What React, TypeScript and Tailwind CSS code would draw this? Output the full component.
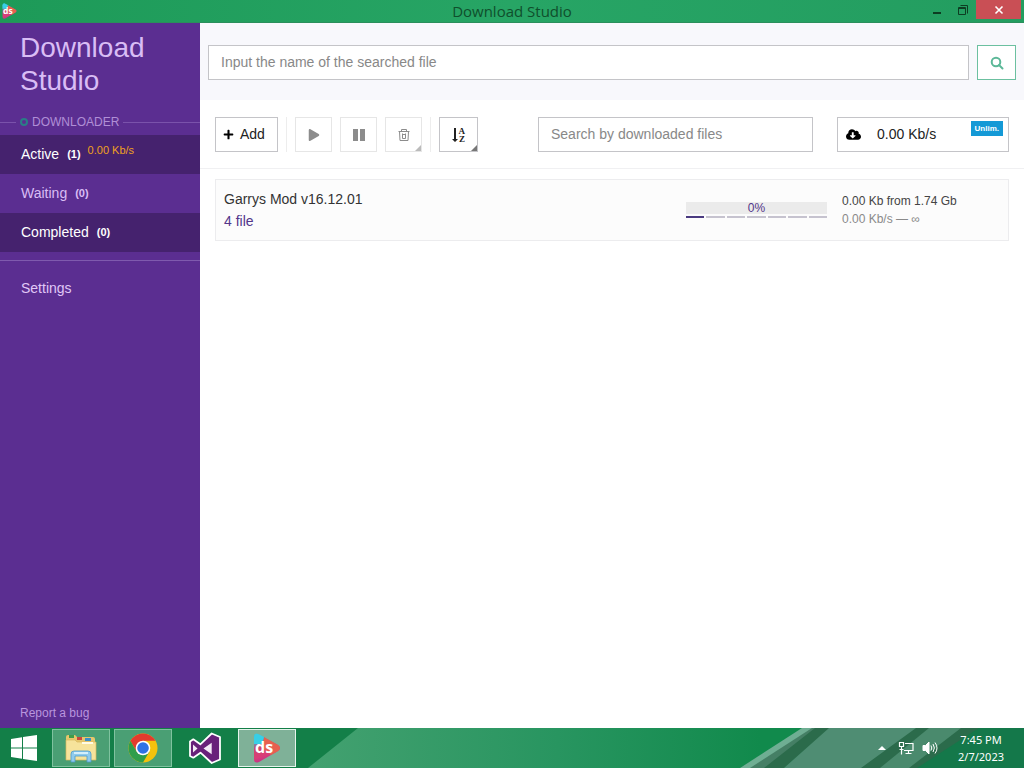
import { useState } from 'react'
import type { ReactNode } from 'react'
import { FaCloudDownloadAlt, FaPlay, FaPlus } from 'react-icons/fa'

const navItems = [
  { id: 'active', label: 'Active', count: 1, speed: '0.00 Kb/s', dark: true },
  { id: 'waiting', label: 'Waiting', count: 0, speed: '', dark: false },
  { id: 'completed', label: 'Completed', count: 0, speed: '', dark: true },
]

const SEGMENTS = 7

function DsLogo({ className, id }: { className: string; id: string }) {
  return (
    <svg viewBox="0 0 28 30" className={className} aria-hidden="true">
      <defs>
        <linearGradient id={id} x1="0" y1="0" x2="0.3" y2="1">
          <stop offset="0" stopColor="#35c4e8" />
          <stop offset="0.25" stopColor="#4f9fc4" />
          <stop offset="0.5" stopColor="#d0476c" />
          <stop offset="0.8" stopColor="#d93d78" />
          <stop offset="1" stopColor="#c0308c" />
        </linearGradient>
      </defs>
      <path d="M1 4Q1 0 5 1L25 12Q29 15 25 18L6 29Q1 31 1 26Z" fill={`url(#${id})`} />
      <path d="M11 4L25 12Q29 15 25 18L18 22L9 14Z" fill="#e8604f" />
      <path d="M1 4Q1 0 5 1L11 4L9 11H1Z" fill="#38cfe6" />
      <text x="2" y="20" fill="#fff" fontSize="16" fontWeight="700" fontFamily="Open Sans, sans-serif">
        ds
      </text>
    </svg>
  )
}

function TitleBar() {
  return (
    <header className="relative flex h-[23px] shrink-0 items-start justify-between border-b border-[#2b8f5c] bg-linear-to-r from-[#1d9a58] via-[#27a565] to-[#239d60]">
      <DsLogo id="ds-title" className="mt-[3px] ml-[2px] h-4 w-[15px]" />
      <h1 className="absolute inset-x-0 top-0 text-center font-['Open_Sans',sans-serif] text-[15px] leading-[23px] text-[#0f4f2c]">
        Download Studio
      </h1>
      <div className="relative flex items-start">
        <button aria-label="Minimize" className="flex h-[19px] w-[26px] items-center justify-center">
          <svg viewBox="0 0 10 10" className="h-[10px] w-[10px]">
            <rect x="1" y="7" width="8" height="2" fill="#0d3d22" />
          </svg>
        </button>
        <button aria-label="Restore" className="flex h-[19px] w-[26px] items-center justify-center">
          <svg viewBox="0 0 12 12" className="h-3 w-3" fill="none" stroke="#0d3d22">
            <path d="M1.500 3.500h7v7h-7zM1 4.500h8M3.500 1.500h7v8" />
          </svg>
        </button>
        <button aria-label="Close" className="mr-[3px] flex h-[19px] w-[45px] items-center justify-center bg-[#c94f55]">
          <svg viewBox="0 0 10 10" className="h-[10px] w-[10px]" stroke="#fff" strokeWidth="1.600">
            <path d="M1.500 1.500l7 7M8.500 1.500l-7 7" />
          </svg>
        </button>
      </div>
    </header>
  )
}

function Sidebar() {
  const [current, setCurrent] = useState('active')

  return (
    <aside className="flex w-[200px] shrink-0 flex-col bg-[#5b2e91] text-[#d9bdf5]">
      <h2 className="px-5 pt-2 text-[28px] leading-[33px]">Download Studio</h2>
      <div className="mt-[17px] flex h-4 items-center text-xs text-[#b08fd6]">
        <span className="h-px w-4 bg-[#7a52ab]" />
        <span className="mr-1 ml-1 h-2 w-2 rounded-full border-2 border-[#2a7d86]" />
        <span>DOWNLOADER</span>
        <span className="ml-1 h-px flex-1 bg-[#7a52ab]" />
      </div>
      <nav className="mt-[5px] border-b border-[#7f5aae] pb-2">
        {navItems.map((item) => (
          <a
            key={item.id}
            href={`#${item.id}`}
            aria-current={current === item.id ? 'page' : undefined}
            onClick={() => setCurrent(item.id)}
            className={
              item.dark
                ? 'flex h-[39px] items-center bg-[#45226e] pb-px pl-[21px] text-sm text-white'
                : 'flex h-[39px] items-center pb-px pl-[21px] text-sm text-[#d9bdf5]'
            }
          >
            <span>{item.label}</span>
            <span className="mt-[2px] ml-2 text-[11px] font-bold">({item.count})</span>
            {item.speed && <span className="mb-[6px] ml-[7px] text-[11px] text-[#f0a01e]">{item.speed}</span>}
          </a>
        ))}
      </nav>
      <a href="#settings" className="mt-[17px] pl-[21px] text-sm text-[#e0c8f7]">
        Settings
      </a>
      <a href="#report" className="mt-auto px-5 pb-[7px] text-xs text-[#b995de]">
        Report a bug
      </a>
    </aside>
  )
}

function ToolButton({ label, menu, dim, children }: { label: string; menu?: boolean; dim?: boolean; children: ReactNode }) {
  return (
    <button
      aria-label={label}
      className={
        dim
          ? 'relative flex h-[35px] w-[37px] items-center justify-center border border-[#e6e6e6] text-[#8c8c8c]'
          : 'relative flex h-[35px] w-[39px] items-center justify-center border border-[#c4c4c8] text-[#222]'
      }
    >
      {children}
      {menu && (
        <svg viewBox="0 0 6 6" className="absolute right-0 bottom-0 h-[6px] w-[6px]" fill={dim ? '#bbb' : '#777'}>
          <path d="M6 0v6H0z" />
        </svg>
      )}
    </button>
  )
}

function Toolbar() {
  return (
    <div className="flex items-center border-b border-[#f0f0f2] px-[15px] pt-[17px] pb-4">
      <button className="flex h-[35px] w-[63px] items-center border border-[#c4c4c8] pb-px pl-[7px] text-sm text-[#222]">
        <FaPlus className="mr-[6px] h-[11px] w-[11px] text-black" />
        Add
      </button>
      <span className="mx-2 h-[35px] w-px bg-[#ededed]" />
      <div className="flex gap-2">
        <ToolButton label="Start" dim>
          <FaPlay className="h-3 w-3" />
        </ToolButton>
        <ToolButton label="Pause" dim>
          <svg viewBox="0 0 12 12" className="h-3 w-3" fill="currentColor">
            <path d="M0 0h5v12H0zM7 0h5v12H7z" />
          </svg>
        </ToolButton>
        <ToolButton label="Delete" dim menu>
          <svg viewBox="0 0 12 14" className="h-[14px] w-3" fill="none" stroke="currentColor">
            <path d="M.5 3.500h11M3.500 3.500V1.500h5v2M1.500 3.500l.5 9h8l.5-9M4.500 5.500v5M7.500 5.500v5M4.500 6.500h3M4.500 10.500h3" />
          </svg>
        </ToolButton>
      </div>
      <span className="mx-2 h-[35px] w-px bg-[#ededed]" />
      <ToolButton label="Sort A to Z" menu>
        <svg viewBox="0 0 14 16" className="h-4 w-[14px]" fill="currentColor">
          <path d="M2 1h2v11h2l-3 3L0 12h2z" />
          <text x="6.500" y="7" fontSize="9" fontWeight="700" fontFamily="Liberation Serif, serif">A</text>
          <text x="7" y="15" fontSize="9" fontWeight="700" fontFamily="Liberation Serif, serif">Z</text>
        </svg>
      </ToolButton>
      <input
        type="text"
        aria-label="Search by downloaded files"
        placeholder="Search by downloaded files"
        className="ml-15 h-[35px] w-[275px] min-w-0 flex-1 border border-[#c4c4c8] px-3 pb-[2px] text-sm placeholder:text-[#888]"
      />
      <button className="relative ml-6 flex h-[35px] w-[172px] shrink-0 items-center border border-[#c4c4c8] pb-px pl-2 text-sm text-[#222]">
        <FaCloudDownloadAlt className="mr-4 h-[15px] w-[15px] text-black" />
        0.00 Kb/s
        <span className="absolute top-[3px] right-[5px] h-[15px] bg-[#1499d6] px-1 text-[8px] leading-[15px] font-bold text-white">
          Unlim.
        </span>
      </button>
    </div>
  )
}

function DownloadRow() {
  return (
    <article className="mx-[15px] mt-[10px] flex h-[62px] items-center border border-[#ececee] bg-[#fcfcfc] pb-px pl-2">
      <div className="min-w-0 flex-1 text-sm leading-[22px]">
        <h3 className="text-[#333]">Garrys Mod v16.12.01</h3>
        <a href="#files" className="text-[#53368a]">
          4 file
        </a>
      </div>
      <div className="w-[141px] shrink-0">
        <div className="h-3 bg-[#ebebeb] text-center text-xs leading-3 text-[#53368a]">0%</div>
        <div className="mt-[2px] flex gap-[2px]">
          {Array.from({ length: SEGMENTS }, (_, i) => (
            <span key={i} className={i === 0 ? 'h-[2px] flex-1 bg-[#4a3a80]' : 'h-[2px] flex-1 bg-[#c6c3cf]'} />
          ))}
        </div>
      </div>
      <div className="ml-[15px] w-[166px] shrink-0 text-xs leading-[18px]">
        <p className="text-[#444]">0.00 Kb from 1.74 Gb</p>
        <p className="text-[#8a8a8a]">0.00 Kb/s — ∞</p>
      </div>
    </article>
  )
}

function SearchIcon() {
  return (
    <svg viewBox="0 0 14 14" className="h-[14px] w-[14px]" fill="none" stroke="currentColor" strokeWidth="2">
      <circle cx="6" cy="6" r="4.300" />
      <path d="M9 9l3.500 3.500" strokeLinecap="round" />
    </svg>
  )
}

function WindowsIcon() {
  return (
    <svg viewBox="0 0 26 26" className="h-[26px] w-[26px]" fill="#fff">
      <path d="M0 4l11-1.700v10.200H0zM12 2.100L26 0v12.500H12zM0 13.500h11v10.200L0 22zM12 13.500h14V26l-14-2.100z" />
    </svg>
  )
}

function ExplorerIcon() {
  return (
    <svg viewBox="0 0 34 30" className="h-[30px] w-[34px]">
      <path d="M2 4q0-2 2-2h7l2 2h16q2 0 2 2v20H2z" fill="#e6c66c" />
      <path d="M5 2h5v3H5z" fill="#3f9c4a" />
      <path d="M13 4h5v3h-5z" fill="#c9473b" />
      <path d="M21 5h6v3h-6z" fill="#3c8dc7" />
      <path d="M2 7h9l2 2h19v18H2z" fill="#f6e39b" stroke="#d9b75c" strokeWidth=".7" />
      <path d="M18 9h11v2H18z" fill="#fffbe4" />
      <path d="M7 29v-8q0-3 3-3h14q3 0 3 3v8h-4v-6H11v6z" fill="#8fcbed" stroke="#4d9bcb" strokeWidth=".8" />
      <path d="M10 19h14v2H10z" fill="#d4effb" />
    </svg>
  )
}

function ChromeIcon() {
  return (
    <svg viewBox="0 0 32 32" className="h-[30px] w-[30px]">
      <circle cx="16" cy="16" r="15.500" fill="#f4c20d" />
      <path d="M2.580 8.250A15.500 15.500 0 0 1 29.420 8.250H16L9.300 19.900z" fill="#e23b2e" />
      <path d="M2.580 8.250A15.500 15.500 0 0 0 16 31.500l6.700-11.600H9.300z" fill="#2f9e4b" />
      <circle cx="16" cy="16" r="7.800" fill="#fff" />
      <circle cx="16" cy="16" r="6.200" fill="#2f72e4" />
    </svg>
  )
}

function VisualStudioIcon() {
  return (
    <svg viewBox="0 0 34 34" className="h-[34px] w-[34px]">
      <path
        d="M2 10.500L5.300 8.300 12.300 13.300 23.700 2.500 32 6v22.500L23.700 32 12.500 21.700 5.300 26.700 2 25z"
        fill="#68217a"
        stroke="#fff"
        strokeWidth="1.800"
        strokeLinejoin="round"
      />
      <path d="M23.700 11.700v11.600l-8.200-5.800zM5 13.500v8l4.500-4z" fill="#f2eaf5" />
    </svg>
  )
}

// Strip of the desktop wallpaper seen through the translucent taskbar
function Wallpaper() {
  return (
    <svg viewBox="0 0 1024 40" preserveAspectRatio="none" className="absolute inset-0 h-full w-full" aria-hidden="true">
      <defs>
        <linearGradient id="wall-mid" x1="310" x2="760" y1="0" y2="0" gradientUnits="userSpaceOnUse">
          <stop offset="0" stopColor="#43a170" />
          <stop offset="0.55" stopColor="#289560" />
          <stop offset="1" stopColor="#118a4c" />
        </linearGradient>
      </defs>
      <rect width="1024" height="40" fill="#137f48" />
      <path d="M358 0H804L740 40H308z" fill="url(#wall-mid)" />
      <path d="M802 0h12l-62 40h-12z" fill="#6fae93" />
      <path d="M812 0h6l-50 40h-18z" fill="#457f65" />
      <path d="M815 0h15l-46 40h-20z" fill="#2b6b4b" />
      <path d="M829 0h89l-56 40h-78z" fill="#4f8d73" />
      <path d="M916 0h15l-50 40h-20z" fill="#2b6b4b" />
      <path d="M929 0h34l-52 40h-31z" fill="#4a8a6d" />
      <path d="M961 0h18l-60 40h-10z" fill="#2b6b4b" />
      <path d="M979 0h45v40H917z" fill="#14784a" />
    </svg>
  )
}

function TaskButton({ label, state, children }: { label: string; state: 'open' | 'idle' | 'focused'; children: ReactNode }) {
  const look = {
    open: 'border-[#7fc29f] bg-[#4a9f74]',
    idle: 'border-transparent',
    focused: 'border-[#e6f4ec] bg-[#7fb198]',
  }
  return (
    <button aria-label={label} className={`flex h-[38px] w-[58px] items-center justify-center border ${look[state]}`}>
      {children}
    </button>
  )
}

function Taskbar() {
  return (
    <footer className="relative h-10 shrink-0">
      <Wallpaper />
      <div className="relative flex h-full items-center gap-1 pr-5">
        <button aria-label="Start" className="flex w-12 items-center justify-center">
          <WindowsIcon />
        </button>
        <TaskButton label="File Explorer" state="open">
          <ExplorerIcon />
        </TaskButton>
        <TaskButton label="Google Chrome" state="open">
          <ChromeIcon />
        </TaskButton>
        <TaskButton label="Visual Studio" state="idle">
          <VisualStudioIcon />
        </TaskButton>
        <TaskButton label="Download Studio" state="focused">
          <DsLogo id="ds-task" className="h-[30px] w-7" />
        </TaskButton>
        <div className="ml-auto flex items-center text-white">
          <button aria-label="Show hidden icons" className="mr-3">
            <svg viewBox="0 0 8 4" className="h-1 w-2" fill="#fff">
              <path d="M4 0l4 4H0z" />
            </svg>
          </button>
          <button aria-label="Network" className="mr-2">
            <svg viewBox="0 0 16 15" className="h-[15px] w-4" fill="none" stroke="#fff" strokeWidth="1.200">
              <path d="M1.500 1.500h4v4h-4zM3.500 5.500v8M1.500 8.500h4M7 2.500h8v7H6M10.500 9.500v3M7.500 12.500h6" />
            </svg>
          </button>
          <button aria-label="Volume" className="mr-5">
            <svg viewBox="0 0 16 14" className="h-[14px] w-4" fill="none" stroke="#fff">
              <path d="M1 4.500h2.500L7 1v12L3.500 9.500H1z" fill="#fff" />
              <path d="M9 4.500q1.500 2.500 0 5M11 3q2.800 4 0 8M13 1.500q4 5.500 0 11" />
            </svg>
          </button>
          <div className="text-center font-['Noto_Sans',sans-serif] text-[11px] leading-[17px]">
            <div>7:45 PM</div>
            <div>2/7/2023</div>
          </div>
        </div>
      </div>
    </footer>
  )
}

export default function App() {
  return (
    <div className="flex h-screen flex-col overflow-hidden bg-white font-['Liberation_Sans',Arial,sans-serif]">
      <TitleBar />
      <div className="flex min-h-0 flex-1">
        <Sidebar />
        <main className="min-w-0 flex-1 bg-white">
          <form className="flex gap-2 bg-[#f8f8fc] px-2 pt-[22px] pb-5" onSubmit={(e) => e.preventDefault()}>
            <input
              type="text"
              aria-label="Input the name of the searched file"
              placeholder="Input the name of the searched file"
              className="h-[35px] min-w-0 flex-1 border border-[#c4c4c8] bg-white px-3 pb-[2px] text-sm placeholder:text-[#888]"
            />
            <button
              aria-label="Search"
              className="flex h-[35px] w-[39px] items-center justify-center border border-[#6cc0a0] bg-white text-[#5cb898]"
            >
              <SearchIcon />
            </button>
          </form>
          <Toolbar />
          <DownloadRow />
        </main>
      </div>
      <Taskbar />
    </div>
  )
}
